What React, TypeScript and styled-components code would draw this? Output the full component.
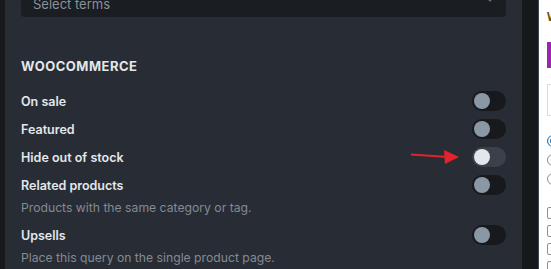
import React from 'react';
import styled, { createGlobalStyle } from 'styled-components';

const GlobalStyle = createGlobalStyle`
  html, body {
    margin: 0;
    padding: 0;
    background: #17191c;
  }
  * {
    box-sizing: border-box;
  }
`;

const Page = styled.div`
  position: relative;
  display: flex;
  width: 551px;
  height: 269px;
  overflow: hidden;
  font-family: Inter, 'Noto Sans', sans-serif;
`;

const Edge = styled.div`
  width: 5px;
  flex-shrink: 0;
  background: #17191c;
`;

const Panel = styled.div`
  width: 517px;
  flex-shrink: 0;
  background: #282d35;
  display: flex;
  flex-direction: column;
`;

const SelectWrap = styled.div`
  padding: 0 16px;
`;

const Select = styled.div`
  height: 40px;
  margin-top: -23px;
  background: #1a1d21;
  border-radius: 4px;
  display: flex;
  align-items: center;
  justify-content: space-between;
  padding: 13px 10px 0 12px;
  color: #8b9199;
  font-size: 13px;
`;

const Chevron = styled.svg`
  width: 12px;
  height: 12px;
  margin-top: -10px;
`;

const Divider = styled.div`
  height: 1px;
  background: #3a4049;
  margin-top: 25px;
`;

const Section = styled.div`
  padding: 14px 16px 0;
  display: flex;
  flex-direction: column;
`;

const Title = styled.h3`
  margin: 0 0 11px;
  height: 20px;
  line-height: 20px;
  font-size: 13px;
  font-weight: 700;
  letter-spacing: 0.5px;
  color: #e4e7eb;
`;

const Row = styled.div`
  height: 28px;
  display: flex;
  align-items: center;
  justify-content: space-between;
`;

const Label = styled.span`
  font-size: 12.5px;
  font-weight: 600;
  color: #e4e7eb;
`;

const Help = styled.p`
  margin: 0 0 4px;
  line-height: 18px;
  font-size: 12.2px;
  color: #838a94;
`;

const Toggle = styled.span<{ $hover?: boolean }>`
  width: 34px;
  height: 20px;
  border-radius: 10px;
  padding: 2px;
  display: flex;
  align-items: center;
  background: ${(p) => (p.$hover ? '#3a414b' : '#17191c')};
`;

const Knob = styled.span<{ $hover?: boolean }>`
  width: 16px;
  height: 16px;
  border-radius: 50%;
  background: ${(p) => (p.$hover ? '#e3e6ea' : '#8a97a4')};
`;

const Gutter = styled.div`
  width: 17px;
  flex-shrink: 0;
  background: #16191c;
  border-right: 1px solid #3b4650;
`;

const Preview = styled.div`
  width: 12px;
  min-width: 0;
  flex-shrink: 0;
  background: #ffffff;
  overflow: hidden;
  padding-left: 8px;
  display: flex;
  flex-direction: column;
`;

const Crumb = styled.div`
  width: 3px;
  height: 2px;
  background: #a7aaad;
`;

const PreviewTitle = styled.div`
  margin-top: 10px;
  font-family: 'Liberation Sans', Arial, sans-serif;
  font-size: 12px;
  font-weight: 700;
  line-height: 14px;
  color: #6b4a22;
  white-space: nowrap;
`;

const PurpleButton = styled.div`
  margin-top: 18px;
  width: 80px;
  flex-shrink: 0;
  height: 26px;
  background: #9b27b0;
`;

const InputBox = styled.div`
  margin-top: 16px;
  width: 80px;
  flex-shrink: 0;
  height: 32px;
  border: 1px solid #dcdcde;
`;

const Radios = styled.div`
  margin-top: 19px;
  display: flex;
  flex-direction: column;
  gap: 7px;
`;

const Radio = styled.span<{ $on?: boolean }>`
  width: 12px;
  height: 12px;
  flex-shrink: 0;
  border-radius: 50%;
  border: 1px solid ${(p) => (p.$on ? '#2271b1' : '#8c8f94')};
  box-shadow: ${(p) => (p.$on ? 'inset 0 0 0 2px #fff, inset 0 0 0 6px #2271b1' : 'none')};
`;

const Checks = styled.div`
  margin-top: 22px;
  display: flex;
  flex-direction: column;
  gap: 6px;
`;

const Check = styled.span`
  width: 12px;
  height: 12px;
  flex-shrink: 0;
  border-radius: 2px;
  border: 1px solid #8c8f94;
`;

const Arrow = styled.svg`
  position: absolute;
  left: 408px;
  top: 148px;
  width: 54px;
  height: 18px;
`;

const options = [
  { label: 'On sale' },
  { label: 'Featured' },
  { label: 'Hide out of stock', hover: true },
  { label: 'Related products', help: 'Products with the same category or tag.' },
  { label: 'Upsells', help: 'Place this query on the single product page.' },
];

const App = () => {
  return (
    <>
      <GlobalStyle />
      <Page>
        <Edge />
        <Panel>
          <SelectWrap>
            <Select>
              <span>Select terms</span>
              <Chevron viewBox='0 0 12 12' fill='none'>
                <path d='M2 4l4 4 4-4' stroke='#6b727c' strokeWidth='1.2' />
              </Chevron>
            </Select>
          </SelectWrap>
          <Divider />
          <Section>
            <Title>WOOCOMMERCE</Title>
            {options.map((o) => (
              <React.Fragment key={o.label}>
                <Row>
                  <Label>{o.label}</Label>
                  <Toggle $hover={o.hover}>
                    <Knob $hover={o.hover} />
                  </Toggle>
                </Row>
                {o.help && <Help>{o.help}</Help>}
              </React.Fragment>
            ))}
          </Section>
        </Panel>
        <Gutter />
        <Preview>
          <Crumb />
          <PreviewTitle>Woo</PreviewTitle>
          <PurpleButton />
          <InputBox />
          <Radios>
            <Radio $on />
            <Radio />
            <Radio />
          </Radios>
          <Checks>
            <Check />
            <Check />
            <Check />
            <Check />
          </Checks>
        </Preview>
        <Arrow viewBox='0 0 54 18'>
          <line x1='3' y1='6.5' x2='40' y2='9' stroke='#e5222b' strokeWidth='2' />
          <polygon points='36,2 51,9 37,16' fill='#e5222b' />
        </Arrow>
      </Page>
    </>
  );
};

export default App;
